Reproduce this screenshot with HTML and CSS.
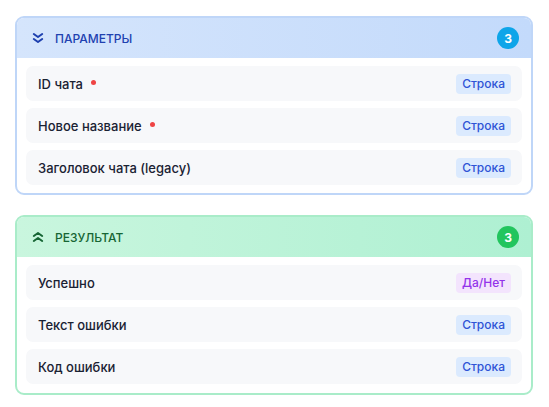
FILE: index.html
```html
<!DOCTYPE html>
<html lang="ru">

<head>
    <meta charset="UTF-8">
    <meta name="viewport" content="width=device-width, initial-scale=1.0">
    <title>Параметры</title>
    <link rel="stylesheet" href="styles.css">
</head>

<body>
    <div class="panel panel-params">
        <div class="panel-head">
            <svg class="chevrons" viewBox="0 0 12 12" width="12" height="12">
                <path d="M1.8 2 L6 5 L10.2 2 M1.8 7 L6 10 L10.2 7" fill="none" stroke="currentColor" stroke-width="2" stroke-linecap="round" stroke-linejoin="round" />
            </svg>
            <span class="panel-title">ПАРАМЕТРЫ</span>
            <span class="count">3</span>
        </div>
        <div class="panel-body">
            <div class="field">
                <span class="field-name">ID чата <i class="required"></i></span>
                <span class="tag tag-string">Строка</span>
            </div>
            <div class="field">
                <span class="field-name">Новое название <i class="required"></i></span>
                <span class="tag tag-string">Строка</span>
            </div>
            <div class="field">
                <span class="field-name">Заголовок чата (legacy)</span>
                <span class="tag tag-string">Строка</span>
            </div>
        </div>
    </div>

    <div class="panel panel-result">
        <div class="panel-head">
            <svg class="chevrons" viewBox="0 0 12 12" width="12" height="12">
                <path d="M1.8 5 L6 2 L10.2 5 M1.8 10 L6 7 L10.2 10" fill="none" stroke="currentColor" stroke-width="2" stroke-linecap="round" stroke-linejoin="round" />
            </svg>
            <span class="panel-title">РЕЗУЛЬТАТ</span>
            <span class="count">3</span>
        </div>
        <div class="panel-body">
            <div class="field">
                <span class="field-name">Успешно</span>
                <span class="tag tag-bool">Да/Нет</span>
            </div>
            <div class="field">
                <span class="field-name">Текст ошибки</span>
                <span class="tag tag-string">Строка</span>
            </div>
            <div class="field">
                <span class="field-name">Код ошибки</span>
                <span class="tag tag-string">Строка</span>
            </div>
        </div>
    </div>
</body>

</html>
```

FILE: styles.css
```css
body {
    margin: 0;
    padding: 16px 16px 0 15px;
    font-family: Inter, 'Noto Sans', sans-serif;
    background-color: #fff;
    color: #1e293b;
}

.panel {
    width: 518px;
    box-sizing: border-box;
    border: 2px solid #bfd6f8;
    border-radius: 9px;
    overflow: hidden;
    margin-bottom: 20px;
    background: #fff;
}

.panel-head {
    display: flex;
    align-items: center;
    height: 40px;
    padding: 0 12px 0 15px;
    background: linear-gradient(90deg, #d5e5fc 0%, #c3dafb 100%);
}

.chevrons {
    color: #1e40af;
    margin-right: 11px;
}

.panel-title {
    font-size: 12px;
    font-weight: 500;
    color: #2141b0;
}

.count {
    margin-left: auto;
    width: 22px;
    height: 22px;
    border-radius: 50%;
    background-color: #0ea5e9;
    color: #fff;
    font-size: 12px;
    font-weight: 700;
    display: flex;
    align-items: center;
    justify-content: center;
}

.panel-result {
    border-color: #a9ecc9;
}

.panel-result .panel-head {
    background: linear-gradient(90deg, #c9f6de 0%, #aef0d2 100%);
}

.panel-result .chevrons,
.panel-result .panel-title {
    color: #166534;
}

.panel-result .count {
    background-color: #22c55e;
}

.panel-body {
    display: flex;
    flex-direction: column;
    gap: 7px;
    padding: 8px 9px 8px 9px;
}

.panel-result .panel-body {
    padding-bottom: 9px;
}

.field {
    display: flex;
    align-items: center;
    justify-content: space-between;
    height: 35px;
    padding: 0 11px 0 12px;
    background-color: #f7f8fa;
    border-radius: 7px;
}

.field-name {
    font-size: 13px;
    font-weight: 500;
    color: #1a2233;
    display: flex;
    align-items: center;
}

.required {
    display: inline-block;
    width: 5px;
    height: 5px;
    border-radius: 50%;
    background-color: #ef4444;
    margin-left: 8px;
    margin-top: -3px;
}

.tag {
    font-size: 12px;
    font-weight: 500;
    line-height: 14px;
    padding: 3px 6px;
    border-radius: 4px;
}

.tag-string {
    background-color: #dbeafe;
    color: #2f54d6;
}

.tag-bool {
    background-color: #f3e4fd;
    color: #9333ea;
}
```
